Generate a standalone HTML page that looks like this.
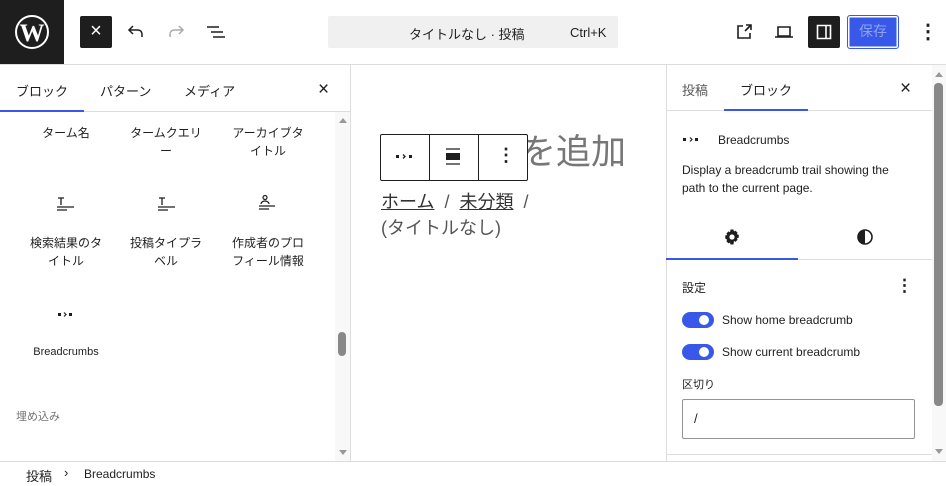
<!DOCTYPE html>
<html><head><meta charset="utf-8"><style>
*{box-sizing:border-box;margin:0;padding:0}
body{width:946px;height:486px;overflow:hidden;background:#fff;font-family:"Liberation Sans","Noto Sans CJK JP",sans-serif;color:#1e1e1e;position:relative}
.a{position:absolute}
.t{font-size:13px}
</style></head><body>
<!-- top bar -->
<div class="a" style="left:0;top:0;width:64px;height:64px;background:#1e1e1e"></div>
<svg class="a" style="left:14px;top:14px" width="36" height="36" viewBox="0 0 36 36"><circle cx="18" cy="18" r="16" fill="none" stroke="#fff" stroke-width="2"/><text x="18" y="27" text-anchor="middle" font-family="Liberation Serif,serif" font-weight="bold" font-size="25" fill="#fff">W</text></svg>
<div class="a" style="left:80px;top:16px;width:32px;height:32px;background:#1e1e1e;border-radius:2px;color:#fff;font-size:20px;text-align:center;line-height:31px">×</div>
<svg class="a" style="left:124px;top:20px" width="24" height="24" viewBox="0 0 24 24"><path d="M18 17v-3a4 4 0 0 0-4-4H6M9 6l-4 4 4 4" fill="none" stroke="#1e1e1e" stroke-width="1.5"/></svg>
<svg class="a" style="left:164px;top:20px" width="24" height="24" viewBox="0 0 24 24"><path d="M6 17v-3a4 4 0 0 1 4-4h8M15 6l4 4-4 4" fill="none" stroke="#aaa" stroke-width="1.5"/></svg>
<svg class="a" style="left:204px;top:20px" width="24" height="24" viewBox="0 0 24 24"><path d="M3 7h12M7 12h12M9 17h12" stroke="#1e1e1e" stroke-width="1.5"/></svg>
<div class="a" style="left:328px;top:16px;width:290px;height:32px;background:#f0f0f0;border-radius:2px"></div>
<div class="a t" style="left:409px;top:24px">タイトルなし · 投稿</div>
<div class="a t" style="left:570px;top:25px">Ctrl+K</div>
<svg class="a" style="left:732px;top:20px" width="24" height="24" viewBox="0 0 24 24"><path d="M11 6H6v12h12v-5M13 11l6-6M14 5h5v5" fill="none" stroke="#1e1e1e" stroke-width="1.6"/></svg>
<svg class="a" style="left:772px;top:20px" width="24" height="24" viewBox="0 0 24 24"><path d="M6 7h12v9H6zM3 17h18" fill="none" stroke="#1e1e1e" stroke-width="1.6"/></svg>
<div class="a" style="left:808px;top:16px;width:32px;height:32px;background:#1e1e1e;border-radius:2px"></div>
<svg class="a" style="left:812px;top:20px" width="24" height="24" viewBox="0 0 24 24"><path d="M5.5 5.5h13v13h-13zM14 5.5v13" fill="none" stroke="#fff" stroke-width="1.6"/></svg>
<div class="a" style="left:847px;top:15px;width:52px;height:34px;background:#3858e9;border:1.5px solid #3858e9;box-shadow:inset 0 0 0 1.5px #fff;border-radius:3px;color:#8fa1ef;font-size:14px;text-align:center;line-height:31px">保存</div>
<div class="a" style="left:918px;top:16px;font-size:20px;line-height:32px;font-weight:bold">⋮</div>
<div class="a" style="left:0;top:64px;width:946px;height:1px;background:#ddd"></div>
<!-- left panel -->
<div class="a" style="left:350px;top:65px;width:1px;height:396px;background:#ddd"></div>
<div class="a t" style="left:16px;top:81px">ブロック</div>
<div class="a t" style="left:100px;top:81px">パターン</div>
<div class="a t" style="left:184px;top:81px">メディア</div>
<div class="a" style="left:318px;top:79px;font-size:19px">×</div>
<div class="a" style="left:0;top:111px;width:350px;height:1px;background:#ddd"></div>
<div class="a" style="left:0;top:110px;width:84px;height:2px;background:#3858e9"></div>
<div class="a" style="left:335px;top:112px;width:15px;height:349px;background:#f8f8f8"></div>
<div class="a" style="left:339px;top:118px;width:0;height:0;border:4px solid transparent;border-bottom:5px solid #999;border-top:0"></div>
<div class="a" style="left:339px;top:450px;width:0;height:0;border:4px solid transparent;border-top:5px solid #999;border-bottom:0"></div>
<div class="a" style="left:338px;top:332px;width:8px;height:24px;background:#888;border-radius:4px"></div>
<div style="font-size:12px;line-height:18px;text-align:center">
<div class="a" style="left:30px;top:124px;width:72px">ターム名</div>
<div class="a" style="left:128px;top:124px;width:76px">タームクエリー</div>
<div class="a" style="left:230px;top:124px;width:76px">アーカイブタイトル</div>
<div class="a" style="left:28px;top:234px;width:76px">検索結果のタイトル</div>
<div class="a" style="left:128px;top:234px;width:76px">投稿タイプラベル</div>
<div class="a" style="left:230px;top:234px;width:76px">作成者のプロフィール情報</div>
<div class="a" style="left:28px;top:343px;width:76px;font-size:11px">Breadcrumbs</div>
</div>
<svg class="a" style="left:56px;top:196px" width="20" height="16"><path d="M2 2h6M5 2v7M1 11h17M1 14h10" stroke="#1e1e1e" stroke-width="1.3"/></svg>
<svg class="a" style="left:157px;top:196px" width="20" height="16"><path d="M2 2h6M5 2v7M1 11h17M1 14h10" stroke="#1e1e1e" stroke-width="1.3"/></svg>
<svg class="a" style="left:258px;top:194px" width="20" height="18"><circle cx="7" cy="3.5" r="2" fill="none" stroke="#1e1e1e" stroke-width="1.2"/><path d="M3 10a4 3 0 0 1 8 0M1 12h16M1 15h10" fill="none" stroke="#1e1e1e" stroke-width="1.3"/></svg>
<svg class="a" style="left:56px;top:310px" width="20" height="10"><rect x="2" y="3" width="3" height="3" fill="#1e1e1e"/><path d="M8 2.5l2 2-2 2" fill="none" stroke="#1e1e1e" stroke-width="1.2"/><rect x="13" y="3" width="3" height="3" fill="#1e1e1e"/></svg>
<div class="a" style="left:16px;top:408px;font-size:11px;color:#757575">埋め込み</div>
<!-- canvas -->
<div class="a" style="left:381px;top:124px;font-size:35px;color:#777">タイトルを追加</div>
<div class="a" style="left:380px;top:134px;width:148px;height:47px;background:#fff;border:1px solid #1e1e1e;border-radius:2px"></div>
<div class="a" style="left:429px;top:134px;width:1px;height:47px;background:#1e1e1e"></div>
<div class="a" style="left:478px;top:134px;width:1px;height:47px;background:#1e1e1e"></div>
<svg class="a" style="left:394px;top:152px" width="22" height="10"><rect x="2" y="3" width="3" height="3" fill="#1e1e1e"/><path d="M9 2.5l2 2-2 2" fill="none" stroke="#1e1e1e" stroke-width="1.3"/><rect x="15" y="3" width="3" height="3" fill="#1e1e1e"/></svg>
<svg class="a" style="left:446px;top:148px" width="16" height="18"><path d="M0 1h14M0 16h14" stroke="#1e1e1e" stroke-width="1.3"/><rect x="0" y="5" width="14" height="7" fill="#1e1e1e"/></svg>
<div class="a" style="left:497px;top:145px;font-size:18px;font-weight:bold">⋮</div>
<div class="a" style="left:381px;top:189px;font-size:18px;color:#555;line-height:26px">
<span style="text-decoration:underline;color:#333">ホーム</span> &nbsp;/&nbsp; <span style="text-decoration:underline;color:#333">未分類</span> &nbsp;/<br>(タイトルなし)</div>
<!-- right panel -->
<div class="a" style="left:666px;top:65px;width:1px;height:396px;background:#ddd"></div>
<div class="a t" style="left:682px;top:80px;color:#555">投稿</div>
<div class="a t" style="left:740px;top:80px">ブロック</div>
<div class="a" style="left:900px;top:78px;font-size:19px">×</div>
<div class="a" style="left:666px;top:110px;width:266px;height:1px;background:#ddd"></div>
<div class="a" style="left:724px;top:109px;width:84px;height:2px;background:#3858e9"></div>
<svg class="a" style="left:682px;top:135px" width="22" height="10"><rect x="1" y="3" width="3" height="3" fill="#1e1e1e"/><path d="M8 2.5l2 2-2 2" fill="none" stroke="#1e1e1e" stroke-width="1.2"/><rect x="13" y="3" width="3" height="3" fill="#1e1e1e"/></svg>
<div class="a" style="left:718px;top:133px;font-size:12px">Breadcrumbs</div>
<div class="a" style="left:682px;top:161px;font-size:12px;line-height:18px;width:228px">Display a breadcrumb trail showing the path to the current page.</div>
<svg class="a" style="left:723px;top:228px" width="18" height="18" viewBox="0 0 24 24"><path fill="#1e1e1e" fill-rule="evenodd" d="M10 2h4l.6 2.6 2-1.1 2.9 2.9-1.1 2 2.6.6v4l-2.6.6 1.1 2-2.9 2.9-2-1.1L14 22h-4l-.6-2.6-2 1.1-2.9-2.9 1.1-2L3 14v-4l2.6-.6-1.1-2 2.9-2.9 2 1.1zM12 8.5a3.5 3.5 0 1 0 0 7 3.5 3.5 0 0 0 0-7z"/></svg>
<svg class="a" style="left:856px;top:228px" width="18" height="18"><circle cx="9" cy="9" r="7" fill="none" stroke="#1e1e1e" stroke-width="1.6"/><path d="M9 2a7 7 0 0 0 0 14z" fill="#1e1e1e"/></svg>
<div class="a" style="left:666px;top:259px;width:266px;height:1px;background:#ddd"></div>
<div class="a" style="left:666px;top:258px;width:132px;height:2px;background:#3858e9"></div>
<div class="a" style="left:682px;top:279px;font-size:12px">設定</div>
<div class="a" style="left:896px;top:276px;font-size:17px;font-weight:bold">⋮</div>
<div class="a" style="left:682px;top:312px;width:32px;height:16px;background:#3858e9;border-radius:8px"></div>
<div class="a" style="left:699px;top:315px;width:10px;height:10px;background:#fff;border-radius:5px"></div>
<div class="a" style="left:722px;top:313px;font-size:12px">Show home breadcrumb</div>
<div class="a" style="left:682px;top:344px;width:32px;height:16px;background:#3858e9;border-radius:8px"></div>
<div class="a" style="left:699px;top:347px;width:10px;height:10px;background:#fff;border-radius:5px"></div>
<div class="a" style="left:722px;top:345px;font-size:12px">Show current breadcrumb</div>
<div class="a" style="left:682px;top:376px;font-size:11px">区切り</div>
<div class="a" style="left:682px;top:399px;width:233px;height:40px;border:1px solid #949494;border-radius:2px"></div>
<div class="a" style="left:694px;top:411px;font-size:13px">/</div>
<div class="a" style="left:666px;top:454px;width:266px;height:1px;background:#ddd"></div>
<div class="a" style="left:932px;top:65px;width:14px;height:396px;background:#f8f8f8"></div>
<div class="a" style="left:935px;top:72px;width:0;height:0;border:4px solid transparent;border-bottom:5px solid #999;border-top:0"></div>
<div class="a" style="left:935px;top:449px;width:0;height:0;border:4px solid transparent;border-top:5px solid #999;border-bottom:0"></div>
<div class="a" style="left:934px;top:83px;width:9px;height:323px;background:#888;border-radius:4px"></div>
<!-- footer -->
<div class="a" style="left:0;top:461px;width:946px;height:1px;background:#ddd"></div>
<div class="a" style="left:26px;top:466px;font-size:13px">投稿</div>
<div class="a" style="left:64px;top:465px;font-size:13px">›</div>
<div class="a" style="left:84px;top:467px;font-size:12px">Breadcrumbs</div>
</body></html>
